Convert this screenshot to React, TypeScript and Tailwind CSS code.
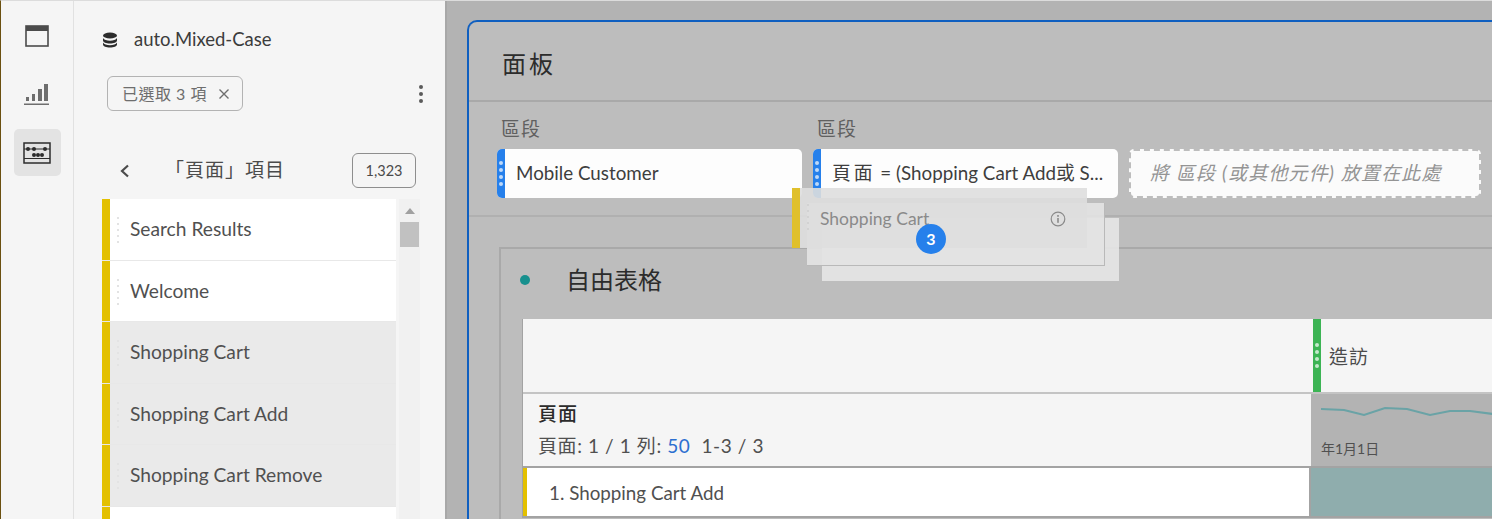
const FONT = "font-['Lato','Noto_Sans_CJK_TC',sans-serif]";

const ITEMS = [
  { label: "Search Results", picked: false },
  { label: "Welcome", picked: false },
  { label: "Shopping Cart", picked: true },
  { label: "Shopping Cart Add", picked: true },
  { label: "Shopping Cart Remove", picked: true },
  { label: "", picked: false },
];

function Grip({ color = "bg-[#e3e3e3]" }: { color?: string }) {
  return (
    <div className="flex w-[3px] flex-col gap-[4px]">
      {[0, 1, 2, 3, 4].map((i) => (
        <span key={i} className={`h-[2px] w-[2px] ${color}`} />
      ))}
    </div>
  );
}

function ChipDots({ className }: { className: string }) {
  return (
    <div className={`flex shrink-0 flex-col items-center justify-center gap-[3px] ${className}`}>
      {[0, 1, 2, 3].map((i) => (
        <span key={i} className="h-[4px] w-[4px] rounded-full bg-white/70" />
      ))}
    </div>
  );
}

function Rail() {
  return (
    <div className="flex w-[73px] shrink-0 flex-col items-center border-r border-[#e1e1e1] bg-[#f5f5f5] pt-[24px]">
      <svg width="24" height="22" viewBox="0 0 24 22" className="text-[#4b4b4b]">
        <rect x="1" y="1" width="22" height="20" fill="none" stroke="currentColor" strokeWidth="1.6" />
        <rect x="1" y="1" width="22" height="5" fill="currentColor" />
      </svg>
      <svg width="26" height="26" viewBox="0 0 26 26" className="mt-[33px] text-[#6e6e6e]">
        <rect x="2" y="17" width="3" height="4" fill="currentColor" />
        <rect x="8" y="14" width="3" height="7" fill="currentColor" />
        <rect x="14" y="9" width="4" height="12" fill="currentColor" />
        <rect x="20" y="4" width="4" height="17" fill="currentColor" />
        <rect x="0" y="23.5" width="25" height="1.5" fill="currentColor" />
      </svg>
      <div className="mt-[23px] flex h-[47px] w-[47px] items-center justify-center rounded-[5px] bg-[#e3e3e3]">
        <svg width="28" height="22" viewBox="0 0 28 22" className="text-[#2c2c2c]">
          <rect x="1" y="1" width="26" height="20" fill="none" stroke="currentColor" strokeWidth="1.5" />
          <path d="M1 7H27M1 16.500H27" stroke="currentColor" strokeWidth="1" />
          {[5, 11, 22].map((x) => (
            <circle key={x} cx={x} cy="7" r="2" fill="currentColor" />
          ))}
          {[11, 15, 19].map((x) => (
            <circle key={x} cx={x} cy="13" r="2" fill="currentColor" />
          ))}
        </svg>
      </div>
    </div>
  );
}

function Sidebar() {
  return (
    <div className="flex w-[371px] shrink-0 flex-col bg-[#f5f5f5] pl-[28px] pr-[25px]">
      <div className="mt-[27px] flex h-[24px] items-center">
        <svg width="16" height="16" viewBox="0 0 16 16" className="text-[#2c2c2c]">
          <ellipse cx="8" cy="3.5" rx="7" ry="3" fill="currentColor" />
          <path d="M1 6v2.5c0 1.7 3.1 3 7 3s7-1.3 7-3V6c-1 1.8-3.700 2.700-7 2.700S2 7.800 1 6z" fill="currentColor" />
          <path d="M1 10.500V12.500c0 1.700 3.100 3 7 3s7-1.300 7-3v-2c-1 1.800-3.700 2.700-7 2.700s-6-.9-7-2.700z" fill="currentColor" />
        </svg>
        <span className="ml-[16px] text-[18.500px] text-[#3c3c3c]">auto.Mixed-Case</span>
      </div>
      <div className="mt-[24px] flex items-center justify-between pl-[5px]">
        <div className="flex h-[35px] w-[136px] items-center rounded-[6px] border border-[#b3b3b3] pl-[14px] text-[16px] tracking-[0.5px] text-[#6e6e6e]">
          <span>已選取 3 項</span>
          <svg width="10" height="10" viewBox="0 0 10 10" className="ml-[12px]">
            <path d="M0.500 0.500L9.500 9.500M9.500 0.500L0.500 9.500" stroke="#6e6e6e" strokeWidth="1.400" />
          </svg>
        </div>
        <div className="mr-[-3px] flex flex-col gap-[3px]">
          {[0, 1, 2].map((i) => (
            <span key={i} className="h-[4px] w-[4px] rounded-full bg-[#5a5a5a]" />
          ))}
        </div>
      </div>
      <div className="mt-[42px] flex items-center pl-[18px]">
        <svg width="10" height="14" viewBox="0 0 10 14" className="shrink-0">
          <path d="M8 1.500L2 7L8 12.500" fill="none" stroke="#4b4b4b" strokeWidth="2.200" />
        </svg>
        <span className="ml-[35px] text-[19px] tracking-[1px] text-[#4b4b4b]">「頁面」項目</span>
        <div className="ml-auto mr-[4px] flex h-[35px] w-[64px] items-center justify-center rounded-[6px] border border-[#8e8e8e] text-[14.500px] text-[#4b4b4b]">
          1,323
        </div>
      </div>
      <div className="mt-[11px] flex min-h-0">
        <div className="flex w-[294px] shrink-0 flex-col">
          {ITEMS.map((item, i) => (
            <div
              key={i}
              className={`flex h-[61.500px] shrink-0 border-b border-[#e8e8e8] ${item.picked ? "bg-[#eaeaea]" : "bg-white"}`}
            >
              <div className="w-[8px] shrink-0 bg-[#e3c000]" />
              <div className="ml-[7px] mt-[18px]">
                <Grip />
              </div>
              <span className="ml-[10px] mt-[17px] text-[19.200px] leading-[26px] text-[#505050]">{item.label}</span>
            </div>
          ))}
        </div>
        <div className="ml-[3px] flex h-[400px] w-[21px] shrink-0 flex-col items-center bg-[#f1f1f1] pt-[9px]">
          <span className="h-0 w-0 border-x-[5px] border-b-[6px] border-x-transparent border-b-[#a0a0a0]" />
          <span className="mt-[8px] h-[25px] w-[19px] bg-[#c1c1c1]" />
        </div>
      </div>
    </div>
  );
}

function SegmentChip({ children }: { children: React.ReactNode }) {
  return (
    <div className="flex h-[49px] w-[305px] overflow-hidden rounded-[5px] bg-[#fdfdfd]">
      <ChipDots className="w-[8px] bg-[#2680eb]" />
      <span className="ml-[11px] mt-[12px] whitespace-nowrap text-[18.800px] leading-[24px] text-[#3e3e3e]">{children}</span>
    </div>
  );
}

function Table() {
  return (
    <div className="ml-[21px] mt-[8px] flex flex-col border-l border-[#a3a3a3]">
      <div className="flex h-[75px] border-b-2 border-[#c4c4c4] bg-[#f5f5f5]">
        <div className="w-[790px] shrink-0" />
        <div className="h-full w-[8px] bg-[#3cb454]">
          <ChipDots className="h-full w-[8px]" />
        </div>
        <span className="ml-[8px] mt-[25px] text-[19px] leading-[26px] tracking-[1px] text-[#4b4b4b]">造訪</span>
      </div>
      <div className="flex h-[74px] border-b-2 border-[#a3a3a3]">
        <div className="w-[788px] shrink-0 border-r-2 border-[#f5f5f5] bg-[#f5f5f5] pl-[15px] pt-[8px]">
          <div className="text-[19px] font-medium leading-[24px] tracking-[1px] text-[#2c2c2c]">頁面</div>
          <div className="mt-[8px] text-[19px] leading-[24px] tracking-[0.600px] text-[#505050]">
            頁面: 1 / 1 列: <span className="text-[#2b6fd0]">50</span>&nbsp; 1-3 / 3
          </div>
        </div>
        <div className="flex-1 bg-[#b3b3b3] pl-[10px]">
          <svg width="172" height="26" viewBox="0 0 172 26" className="mt-[11px] block">
            <path
              d="M0 4L23 5L43 10L64 3L86 4L109 10L129 6L149 6L172 9"
              fill="none"
              stroke="#6aa3a6"
              strokeWidth="2"
            />
          </svg>
          <div className="mt-[8px] text-[14px] leading-[20px] text-[#505050]">年1月1日</div>
        </div>
      </div>
      <div className="flex h-[50px] border-b-2 border-[#a3a3a3]">
        <div className="flex w-[788px] shrink-0 border-r-2 border-[#a3a3a3] bg-white">
          <div className="w-[4px] bg-[#e3c000]" />
          <span className="ml-[22px] mt-[12px] text-[18.800px] leading-[26px] text-[#505050]">1. Shopping Cart Add</span>
        </div>
        <div className="flex-1 bg-[#8fadad]" />
      </div>
    </div>
  );
}

function DragGhost() {
  return (
    <>
      <div className="absolute left-[821px] top-[217px] h-[63px] w-[297px] bg-[#e6e6e6]/90" />
      <div className="absolute left-[806px] top-[202px] h-[63px] w-[298px] border-b border-r border-[#b9b9b9] bg-[#e3e3e3]/90" />
      <div className="absolute left-[791px] top-[187px] flex h-[60px] w-[295px] bg-[#dedede]/90">
        <div className="w-[8px] bg-[#e0c02c]" />
        <div className="ml-[7px] mt-[16px]">
          <Grip color="bg-[#d2d2d2]" />
        </div>
        <span className="ml-[10px] mt-[18px] text-[17.500px] leading-[26px] text-[#8a8a8a]">Shopping Cart</span>
        <svg width="16" height="16" viewBox="0 0 16 16" className="absolute left-[258px] top-[23px]">
          <circle cx="8" cy="8" r="6.800" fill="none" stroke="#8a8a8a" strokeWidth="1.200" />
          <rect x="7.200" y="7" width="1.600" height="4.800" fill="#8a8a8a" />
          <rect x="7.200" y="4" width="1.600" height="1.800" fill="#8a8a8a" />
        </svg>
      </div>
      <div className="absolute left-[915px] top-[223px] flex h-[30px] w-[30px] items-center justify-center rounded-full bg-[#2680eb] text-[16px] font-bold text-white">
        3
      </div>
    </>
  );
}

export default function App() {
  return (
    <div className={`relative flex h-[519px] w-[1492px] overflow-hidden border-t border-[#dcdcdc] border-l border-l-[#6b5010] ${FONT}`}>
      <Rail />
      <Sidebar />
      <div className="w-[2px] shrink-0 bg-[#a8a8a8]" />
      <div className="min-w-0 flex-1 bg-[#b3b3b3] pl-[20px] pt-[19px]">
        <div className="h-[600px] w-[1100px] rounded-tl-[10px] border-l-2 border-t-2 border-[#0f5fc0] bg-[#bdbdbd]">
          <div className="flex h-[80px] items-center border-b-2 border-[#a9a9a9] pl-[33px] pt-[6px] text-[24px] leading-[30px] tracking-[3px] text-[#2c2c2c]">
            面板
          </div>
          <div className="flex h-[115px] flex-col border-b-2 border-[#b0b0b0] pl-[28px]">
            <div className="mt-[14px] flex gap-[11px] pl-[4px]">
              <span className="w-[305px] text-[19px] leading-[26px] tracking-[1px] text-[#606060]">區段</span>
              <span className="text-[19px] leading-[26px] tracking-[1px] text-[#606060]">區段</span>
            </div>
            <div className="mt-[7px] flex gap-[11px]">
              <SegmentChip>Mobile Customer</SegmentChip>
              <SegmentChip>
                <span className="tracking-[3px]">頁面</span> = (Shopping Cart Add或 S...
              </SegmentChip>
              <div className="flex h-[49px] w-[352px] items-center rounded-[5px] border-2 border-dashed border-[#bdbdbd] bg-[#fbfbfb] pl-[19px] text-[19px] italic tracking-[1.200px] text-[#949494]">
                將 區段 (或其他元件) 放置在此處
              </div>
            </div>
          </div>
          <div className="ml-[30px] mt-[30px] h-[400px] border-l-2 border-t-2 border-[#a9a9a9]">
            <div className="flex h-[62px] items-center pl-[19px]">
              <span className="h-[10px] w-[10px] rounded-full bg-[#17908e]" />
              <span className="ml-[36px] text-[24px] text-[#2c2c2c]">自由表格</span>
            </div>
            <Table />
          </div>
        </div>
      </div>
      <DragGhost />
    </div>
  );
}
